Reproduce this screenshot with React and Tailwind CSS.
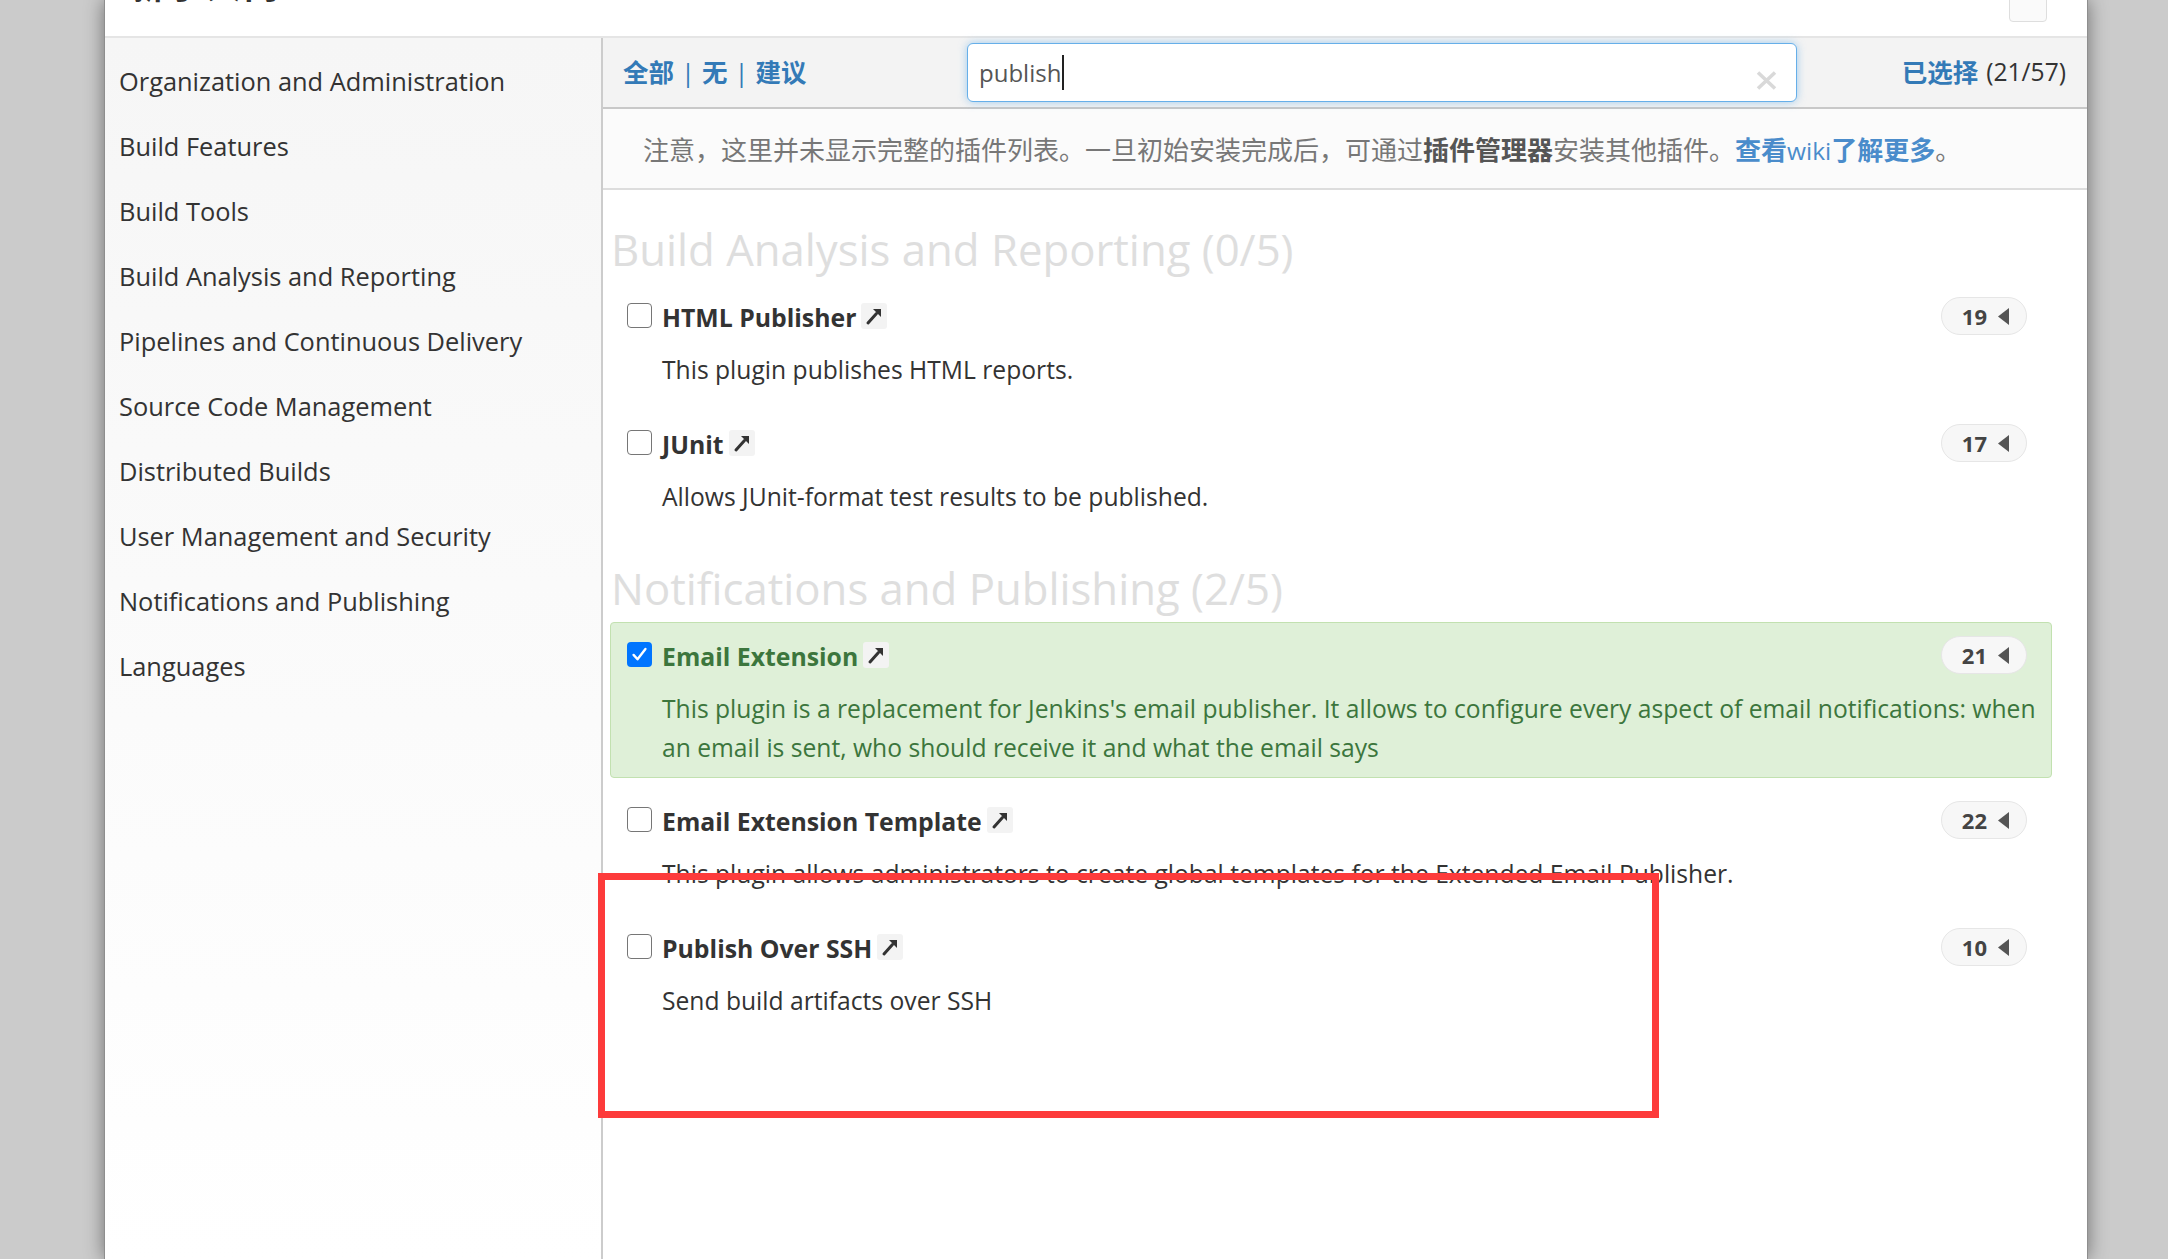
import React from "react";

const sidebarItems = [
  "Organization and Administration",
  "Build Features",
  "Build Tools",
  "Build Analysis and Reporting",
  "Pipelines and Continuous Delivery",
  "Source Code Management",
  "Distributed Builds",
  "User Management and Security",
  "Notifications and Publishing",
  "Languages",
];

function Checkbox({ checked }) {
  if (checked) {
    return (
      <div className="w-[25px] h-[25px] rounded-[4px] bg-[#0075ff] flex items-center justify-center shrink-0 mt-[7px]">
        <svg width="19" height="19" viewBox="0 0 24 24">
          <path d="M4.5 12.5l5 5.5L19.5 5" fill="none" stroke="white" strokeWidth="3" strokeLinecap="round" strokeLinejoin="round" />
        </svg>
      </div>
    );
  }
  return <div className="w-[25px] h-[25px] rounded-[4px] border-[1.5px] border-[#767676] bg-white shrink-0 mt-[7px]" />;
}

function ExtIcon() {
  return (
    <span className="ml-[5px] mt-[7px] w-[26px] h-[26px] rounded-[3px] bg-[#f3f3f3] flex items-center justify-center shrink-0">
      <svg width="20" height="20" viewBox="0 0 20 20">
        <path d="M4 17L12.5 7.5" stroke="#333" strokeWidth="3" strokeLinecap="round" />
        <path d="M9 3H17V11Z" fill="#333" />
      </svg>
    </span>
  );
}

function Badge({ n }) {
  return (
    <div className="ml-auto mr-[8px] mt-[1px] h-[38px] rounded-full border border-[#e6e6e6] bg-[#f7f7f7] pl-[20px] pr-[17px] flex items-center gap-[11px] text-[22px] font-bold text-[#444] leading-none shrink-0">
      <span>{n}</span>
      <svg width="11" height="17" viewBox="0 0 11 17">
        <path d="M11 0V17L0 8.5Z" fill="#555" />
      </svg>
    </div>
  );
}

function PluginRow({ name, desc, n, checked }) {
  return (
    <div
      className={
        checked
          ? "mb-[9px] rounded-[4px] border border-[#c2e1b0] bg-[#dff0d8] text-[#3c763d] px-[16px] pt-[12px] pb-[10px]"
          : "mb-[9px] rounded-[4px] border border-transparent text-[#333] px-[16px] pt-[12px] pb-[10.5px]"
      }
    >
      <div className="flex items-start h-[38px]">
        <Checkbox checked={checked} />
        <span className="ml-[10px] pt-[4px] leading-[34px] text-[24.8px] font-bold whitespace-nowrap">{name}</span>
        <ExtIcon />
        <Badge n={n} />
      </div>
      <div className="mt-[17px] pl-[35px] text-[24.65px] leading-[38.5px] whitespace-nowrap">{desc}</div>
    </div>
  );
}

function SectionTitle({ children }) {
  return (
    <h2 className="mt-[26px] mb-[9px] ml-[1px] text-[43.7px] leading-[50px] font-normal text-[#dedede] whitespace-nowrap">
      {children}
    </h2>
  );
}

export default function App() {
  return (
    <div className="w-[2168px] h-[1259px] bg-[#cbcbcb] overflow-hidden relative font-['Open_Sans','Noto_Sans_CJK_SC',sans-serif]">
      <div className="ml-[104px] w-[1984px] h-full bg-white border-x border-[#8e8e8e] shadow-[0_0_18px_rgba(0,0,0,0.45)] flex flex-col">
        {/* header */}
        <div className="h-[38px] border-b-2 border-[#e5e5e5] relative overflow-hidden shrink-0">
          <div className="absolute left-[25px] top-[-31px] text-[34px] leading-[34px] font-bold text-[#333] tracking-[4px]">
            新手入门
          </div>
          <div className="absolute right-[40px] top-[-16px] w-[38px] h-[38px] rounded-[4px] border border-[#dedede] bg-[#fafafa] flex items-start justify-center overflow-hidden">
            <span className="text-[30px] leading-[30px] text-[#c8c8c8] font-bold mt-[-10px]">×</span>
          </div>
        </div>

        <div className="flex flex-1 min-h-0">
          {/* sidebar */}
          <div className="w-[498px] shrink-0 border-r-2 border-[#cccccc] bg-linear-to-b from-[#f6f6f6] to-[#ffffff] pt-[11px] pl-[14px]">
            {sidebarItems.map((s) => (
              <div key={s} className="h-[65px] flex items-center text-[25.4px] text-[#333] whitespace-nowrap">
                {s}
              </div>
            ))}
          </div>

          {/* main */}
          <div className="flex-1 flex flex-col min-w-0">
            {/* toolbar */}
            <div className="h-[71px] shrink-0 bg-[#f3f3f3] border-b-2 border-[#c8c8c8] flex items-center pl-[20px] pr-[21px]">
              <div className="w-[344px] shrink-0 flex items-center text-[25.5px] font-bold text-[#337ab7]">
                <span>全部</span>
                <span className="mx-[7px] font-normal">|</span>
                <span>无</span>
                <span className="mx-[7px] font-normal">|</span>
                <span>建议</span>
              </div>
              <div className="w-[830px] h-[59px] shrink-0 relative rounded-[6px] border-[1.5px] border-[#66afe9] bg-white shadow-[0_0_8px_rgba(102,175,233,0.6)] flex items-center pl-[11px]">
                <span className="text-[24px] text-[#555]">publish</span>
                <span className="w-[1.5px] h-[35px] bg-[#222] ml-[1px]" />
                <svg className="absolute right-[19px] top-[27px]" width="21" height="19" viewBox="0 0 21 19">
                  <path d="M2 1.5L19 17.5M19 1.5L2 17.5" stroke="#d9d9d9" strokeWidth="3.6" />
                </svg>
              </div>
              <div className="ml-auto flex items-center whitespace-nowrap">
                <span className="text-[25.5px] font-bold text-[#337ab7]">已选择</span>
                <span className="ml-[8px] text-[24.6px] text-[#333]">(21/57)</span>
              </div>
            </div>

            {/* notice */}
            <div className="h-[81px] shrink-0 bg-[#fbfbfb] border-b-2 border-[#dddddd] flex items-center pl-[40px] pt-[3px] text-[26px] text-[#777] whitespace-nowrap">
              <span>
                注意，这里并未显示完整的插件列表。一旦初始安装完成后，可通过
                <b className="text-[#555]">插件管理器</b>
                安装其他插件。
                <span className="font-bold text-[#4a8ccb]">
                  查看<span className="font-normal text-[24.5px]">wiki</span>了解更多
                </span>
                。
              </span>
            </div>

            {/* plugin list */}
            <div className="flex flex-col pt-[8px] pl-[7px] pr-[35px]">
              <SectionTitle>Build Analysis and Reporting (0/5)</SectionTitle>
              <PluginRow name="HTML Publisher" n="19" desc="This plugin publishes HTML reports." />
              <PluginRow name="JUnit" n="17" desc="Allows JUnit-format test results to be published." />
              <SectionTitle>Notifications and Publishing (2/5)</SectionTitle>
              <PluginRow
                checked
                name="Email Extension"
                n="21"
                desc={
                  <>
                    This plugin is a replacement for Jenkins's email publisher. It allows to configure every aspect of email notifications: when
                    <br />
                    an email is sent, who should receive it and what the email says
                  </>
                }
              />
              <PluginRow
                name="Email Extension Template"
                n="22"
                desc="This plugin allows administrators to create global templates for the Extended Email Publisher."
              />
              <PluginRow name="Publish Over SSH" n="10" desc="Send build artifacts over SSH" />
            </div>
          </div>
        </div>
      </div>

      {/* red annotation rectangle */}
      <div className="absolute left-[598px] top-[873px] w-[1061px] h-[245px] border-[7px] border-[#fd3b3b] pointer-events-none" />
    </div>
  );
}
